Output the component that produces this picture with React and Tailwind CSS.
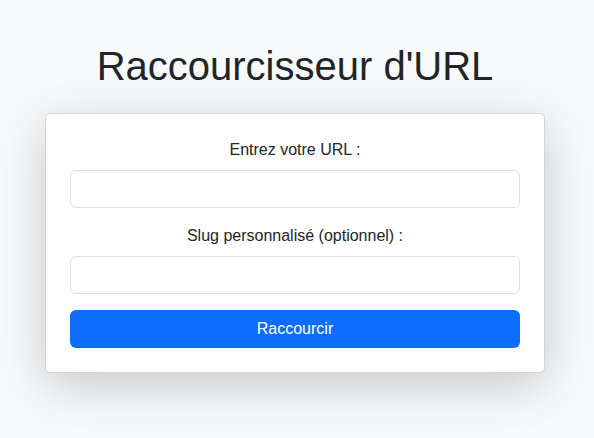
import React, { useState } from 'react';

export default function App() {
    const [url, setUrl] = useState('');
    const [slug, setSlug] = useState('');

    return (
        <div className="min-h-[438px] bg-[#f8f9fa] text-[#212529] font-['Liberation_Sans',Arial,sans-serif] flex flex-col items-center pt-[42px] pr-1">
            <h1 className="text-[40px] leading-[48px] font-normal text-center">Raccourcisseur d'URL</h1>

            {/* Form card */}
            <form
                onSubmit={(e) => e.preventDefault()}
                className="mt-[23px] w-[500px] bg-white border border-[#d4d4d4] rounded-[5px] p-[24px] shadow-[0_12px_50px_rgba(0,0,0,0.2)] flex flex-col"
            >
                <label className="text-base leading-6 text-center mb-2">Entrez votre URL :</label>
                <input
                    value={url}
                    onChange={(e) => setUrl(e.target.value)}
                    className="h-[38px] w-full border border-[#dee2e6] rounded-[6px] px-3 outline-none"
                />

                <label className="text-base leading-6 text-center mt-[16px] mb-2">Slug personnalisé (optionnel) :</label>
                <input
                    value={slug}
                    onChange={(e) => setSlug(e.target.value)}
                    className="h-[38px] w-full border border-[#dee2e6] rounded-[6px] px-3 outline-none"
                />

                <button
                    type="submit"
                    className="mt-[16px] h-[38px] w-full bg-[#0d6efd] text-white text-base rounded-[6px]"
                >
                    Raccourcir
                </button>
            </form>
        </div>
    );
}
